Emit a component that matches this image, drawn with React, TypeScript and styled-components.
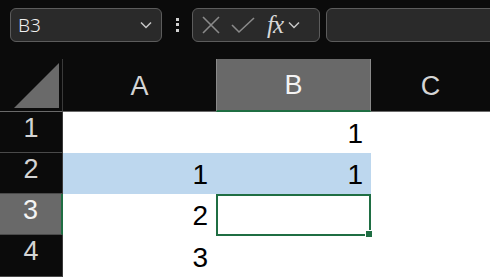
import { createGlobalStyle, styled } from 'styled-components';

const GlobalStyle = createGlobalStyle`
  html, body {
    margin: 0;
    padding: 0;
    background: #0b0b0b;
    overflow: hidden;
  }
`;

const GREEN = '#1f6e43';

const App = () => {
  return (
    <Page>
      <GlobalStyle />
      <TopBar>
        <NameBox>
          <NameText>B3</NameText>
          <Chevron size={14} />
        </NameBox>
        <Grip>
          <span />
          <span />
          <span />
        </Grip>
        <ActionBox>
          <svg width="20" height="20" viewBox="0 0 20 20">
            <path d="M2 2 L18 18 M18 2 L2 18" stroke="#8a8a8a" strokeWidth="1.6" fill="none" />
          </svg>
          <svg width="24" height="20" viewBox="0 0 24 20">
            <path d="M1 10 L8 17 L23 3" stroke="#8a8a8a" strokeWidth="1.6" fill="none" />
          </svg>
          <Fx>fx</Fx>
          <Chevron size={14} />
        </ActionBox>
        <FormulaBox />
      </TopBar>
      <Sheet>
        <Corner>
          <svg width="62" height="52" viewBox="0 0 62 52">
            <polygon points="14,49 59,49 59,4" fill="#6a6a6a" />
          </svg>
        </Corner>
        <ColHeader>A</ColHeader>
        <ColHeader active>B</ColHeader>
        <ColHeader>C</ColHeader>

        <RowHeader>1</RowHeader>
        <Cell />
        <Cell>1</Cell>
        <Cell />

        <RowHeader>2</RowHeader>
        <Cell selected>1</Cell>
        <Cell selected>1</Cell>
        <Cell />

        <RowHeader active>3</RowHeader>
        <Cell>2</Cell>
        <ActiveCell>
          <FillHandle />
        </ActiveCell>
        <Cell />

        <RowHeader>4</RowHeader>
        <Cell>3</Cell>
        <Cell />
        <Cell />
      </Sheet>
    </Page>
  );
};

const Chevron = ({ size }: { size: number }) => (
  <svg width={size} height={size} viewBox="0 0 14 14">
    <path d="M2 4.5 L7 9.5 L12 4.5" stroke="#c8c8c8" strokeWidth="1.5" fill="none" />
  </svg>
);

const Page = styled.div`
  width: 490px;
  height: 277px;
  background: #0b0b0b;
  overflow: hidden;
`;

const TopBar = styled.div`
  display: flex;
  align-items: center;
  height: 59px;
  padding: 0 0 10px 10px;
  box-sizing: border-box;
`;

const Box = styled.div`
  height: 34px;
  box-sizing: border-box;
  background: #2a2a2a;
  border: 1px solid #5c5c5c;
  border-radius: 6px;
  display: flex;
  align-items: center;
`;

const NameBox = styled(Box)`
  width: 152px;
  padding: 0 8px 0 7px;
  justify-content: space-between;
`;

const NameText = styled.span`
  font-family: 'Noto Sans', 'Liberation Sans', sans-serif;
  font-size: 19px;
  font-weight: 300;
  color: #f0f0f0;
`;

const Grip = styled.div`
  width: 30px;
  display: flex;
  flex-direction: column;
  align-items: center;
  gap: 2.5px;

  span {
    width: 3px;
    height: 3px;
    background: #d0d0d0;
  }
`;

const ActionBox = styled(Box)`
  width: 128px;
  padding: 0 2px 0 8px;
  gap: 10px;
`;

const Fx = styled.span`
  font-family: 'Liberation Serif', serif;
  font-style: italic;
  font-size: 25px;
  color: #d8d8d8;
  margin-left: 2px;
  margin-right: -6px;
  letter-spacing: -1px;
`;

const FormulaBox = styled(Box)`
  flex: 1;
  margin-left: 6px;
  border-top-right-radius: 0;
  border-bottom-right-radius: 0;
  margin-right: -2px;
`;

const Sheet = styled.div`
  display: grid;
  grid-template-columns: 63px 153px 155px 1fr;
  grid-template-rows: 53px 41px 41px 41px 42px;
`;

const Corner = styled.div`
  background: #0b0b0b;
  border-right: 1px solid #3a3a3a;
  border-bottom: 1px solid #6a6a6a;
  box-sizing: border-box;
  line-height: 0;
`;

const ColHeader = styled.div<{ active?: boolean }>`
  display: flex;
  align-items: center;
  justify-content: center;
  box-sizing: border-box;
  background: ${(p) => (p.active ? '#696969' : '#0b0b0b')};
  border-bottom: ${(p) => (p.active ? `2px solid ${GREEN}` : '1px solid #6a6a6a')};
  border-left: ${(p) => (p.active ? '1px solid #8a8a8a' : 'none')};
  border-right: ${(p) => (p.active ? '1px solid #8a8a8a' : 'none')};
  font-family: 'Liberation Sans', Arial, sans-serif;
  font-size: 27px;
  color: ${(p) => (p.active ? '#f4f4f4' : '#d4d4d4')};
  padding-top: 2px;
`;

const RowHeader = styled.div<{ active?: boolean }>`
  display: flex;
  align-items: center;
  justify-content: center;
  box-sizing: border-box;
  background: ${(p) => (p.active ? '#696969' : '#0b0b0b')};
  border-right: ${(p) => (p.active ? `2px solid ${GREEN}` : '1px solid #3a3a3a')};
  border-bottom: 1px solid #4a4a4a;
  font-family: 'Liberation Sans', Arial, sans-serif;
  font-size: 27px;
  color: ${(p) => (p.active ? '#f4f4f4' : '#d4d4d4')};
  padding-bottom: 8px;
`;

const Cell = styled.div<{ selected?: boolean }>`
  display: flex;
  align-items: flex-end;
  justify-content: flex-end;
  box-sizing: border-box;
  padding: 0 8px 5px 0;
  background: ${(p) => (p.selected ? '#bdd7ee' : '#ffffff')};
  font-family: 'Liberation Sans', Arial, sans-serif;
  font-size: 28px;
  line-height: 1;
  color: #000;
`;

const ActiveCell = styled.div`
  position: relative;
  box-sizing: border-box;
  background: #fff;
  border: 2px solid ${GREEN};
  margin-bottom: -1px;
`;

const FillHandle = styled.div`
  position: absolute;
  right: -4px;
  bottom: -4px;
  width: 6px;
  height: 6px;
  background: ${GREEN};
  border: 1px solid #fff;
`;

export default App;
